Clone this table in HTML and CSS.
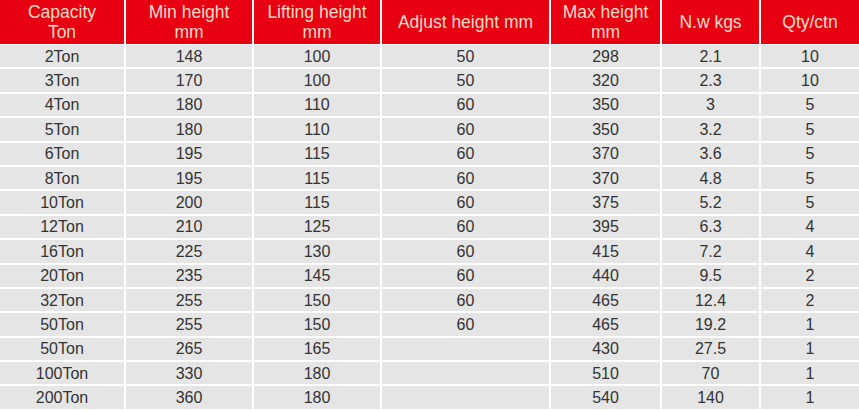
FILE: index.html
```html
<!DOCTYPE html>
<html>
<head>
<meta charset="utf-8">
<link rel="stylesheet" href="styles.css">
</head>
<body>
<table class="spec">
  <colgroup>
    <col class="c1"><col class="c2"><col class="c3"><col class="c4"><col class="c5"><col class="c6"><col class="c7">
  </colgroup>
  <thead>
    <tr>
      <th>Capacity<br>Ton</th>
      <th>Min height<br>mm</th>
      <th>Lifting height<br>mm</th>
      <th>Adjust height mm</th>
      <th>Max height<br>mm</th>
      <th>N.w kgs</th>
      <th>Qty/ctn</th>
    </tr>
  </thead>
  <tbody>
    <tr><td>2Ton</td><td>148</td><td>100</td><td>50</td><td>298</td><td>2.1</td><td>10</td></tr>
    <tr><td>3Ton</td><td>170</td><td>100</td><td>50</td><td>320</td><td>2.3</td><td>10</td></tr>
    <tr><td>4Ton</td><td>180</td><td>110</td><td>60</td><td>350</td><td>3</td><td>5</td></tr>
    <tr><td>5Ton</td><td>180</td><td>110</td><td>60</td><td>350</td><td>3.2</td><td>5</td></tr>
    <tr><td>6Ton</td><td>195</td><td>115</td><td>60</td><td>370</td><td>3.6</td><td>5</td></tr>
    <tr><td>8Ton</td><td>195</td><td>115</td><td>60</td><td>370</td><td>4.8</td><td>5</td></tr>
    <tr><td>10Ton</td><td>200</td><td>115</td><td>60</td><td>375</td><td>5.2</td><td>5</td></tr>
    <tr><td>12Ton</td><td>210</td><td>125</td><td>60</td><td>395</td><td>6.3</td><td>4</td></tr>
    <tr><td>16Ton</td><td>225</td><td>130</td><td>60</td><td>415</td><td>7.2</td><td>4</td></tr>
    <tr><td>20Ton</td><td>235</td><td>145</td><td>60</td><td>440</td><td>9.5</td><td>2</td></tr>
    <tr><td>32Ton</td><td>255</td><td>150</td><td>60</td><td>465</td><td>12.4</td><td>2</td></tr>
    <tr><td>50Ton</td><td>255</td><td>150</td><td>60</td><td>465</td><td>19.2</td><td>1</td></tr>
    <tr><td>50Ton</td><td>265</td><td>165</td><td></td><td>430</td><td>27.5</td><td>1</td></tr>
    <tr><td>100Ton</td><td>330</td><td>180</td><td></td><td>510</td><td>70</td><td>1</td></tr>
    <tr><td>200Ton</td><td>360</td><td>180</td><td></td><td>540</td><td>140</td><td>1</td></tr>
  </tbody>
</table>
</body>
</html>
```

FILE: styles.css
```css
html, body {
  margin: 0;
  padding: 0;
  background: #ffffff;
}

.spec {
  width: 859px;
  table-layout: fixed;
  border-collapse: separate;
  border-spacing: 0;
  font-family: "Liberation Sans", Arial, sans-serif;
  font-size: 16px;
}

.c1 { width: 126px; }
.c2 { width: 128px; }
.c3 { width: 128px; }
.c4 { width: 169px; }
.c5 { width: 111px; }
.c6 { width: 99px; }
.c7 { width: 98px; }

.spec th,
.spec td {
  padding: 0;
  text-align: center;
  vertical-align: middle;
  border-right: 2px solid #ffffff;
  border-bottom: 2px solid #ffffff;
  box-sizing: border-box;
}

.spec th:last-child,
.spec td:last-child {
  border-right: none;
}

.spec th {
  background: #e60012;
  color: #ffdcc4;
  font-weight: normal;
  font-size: 17.5px;
  line-height: 20px;
  height: 45px;
  border-bottom-width: 1.5px;
}

.spec td {
  background: #e5e5e5;
  color: #333333;
  line-height: 18px;
  height: 24.4px;
  padding-top: 1px;
}
```
